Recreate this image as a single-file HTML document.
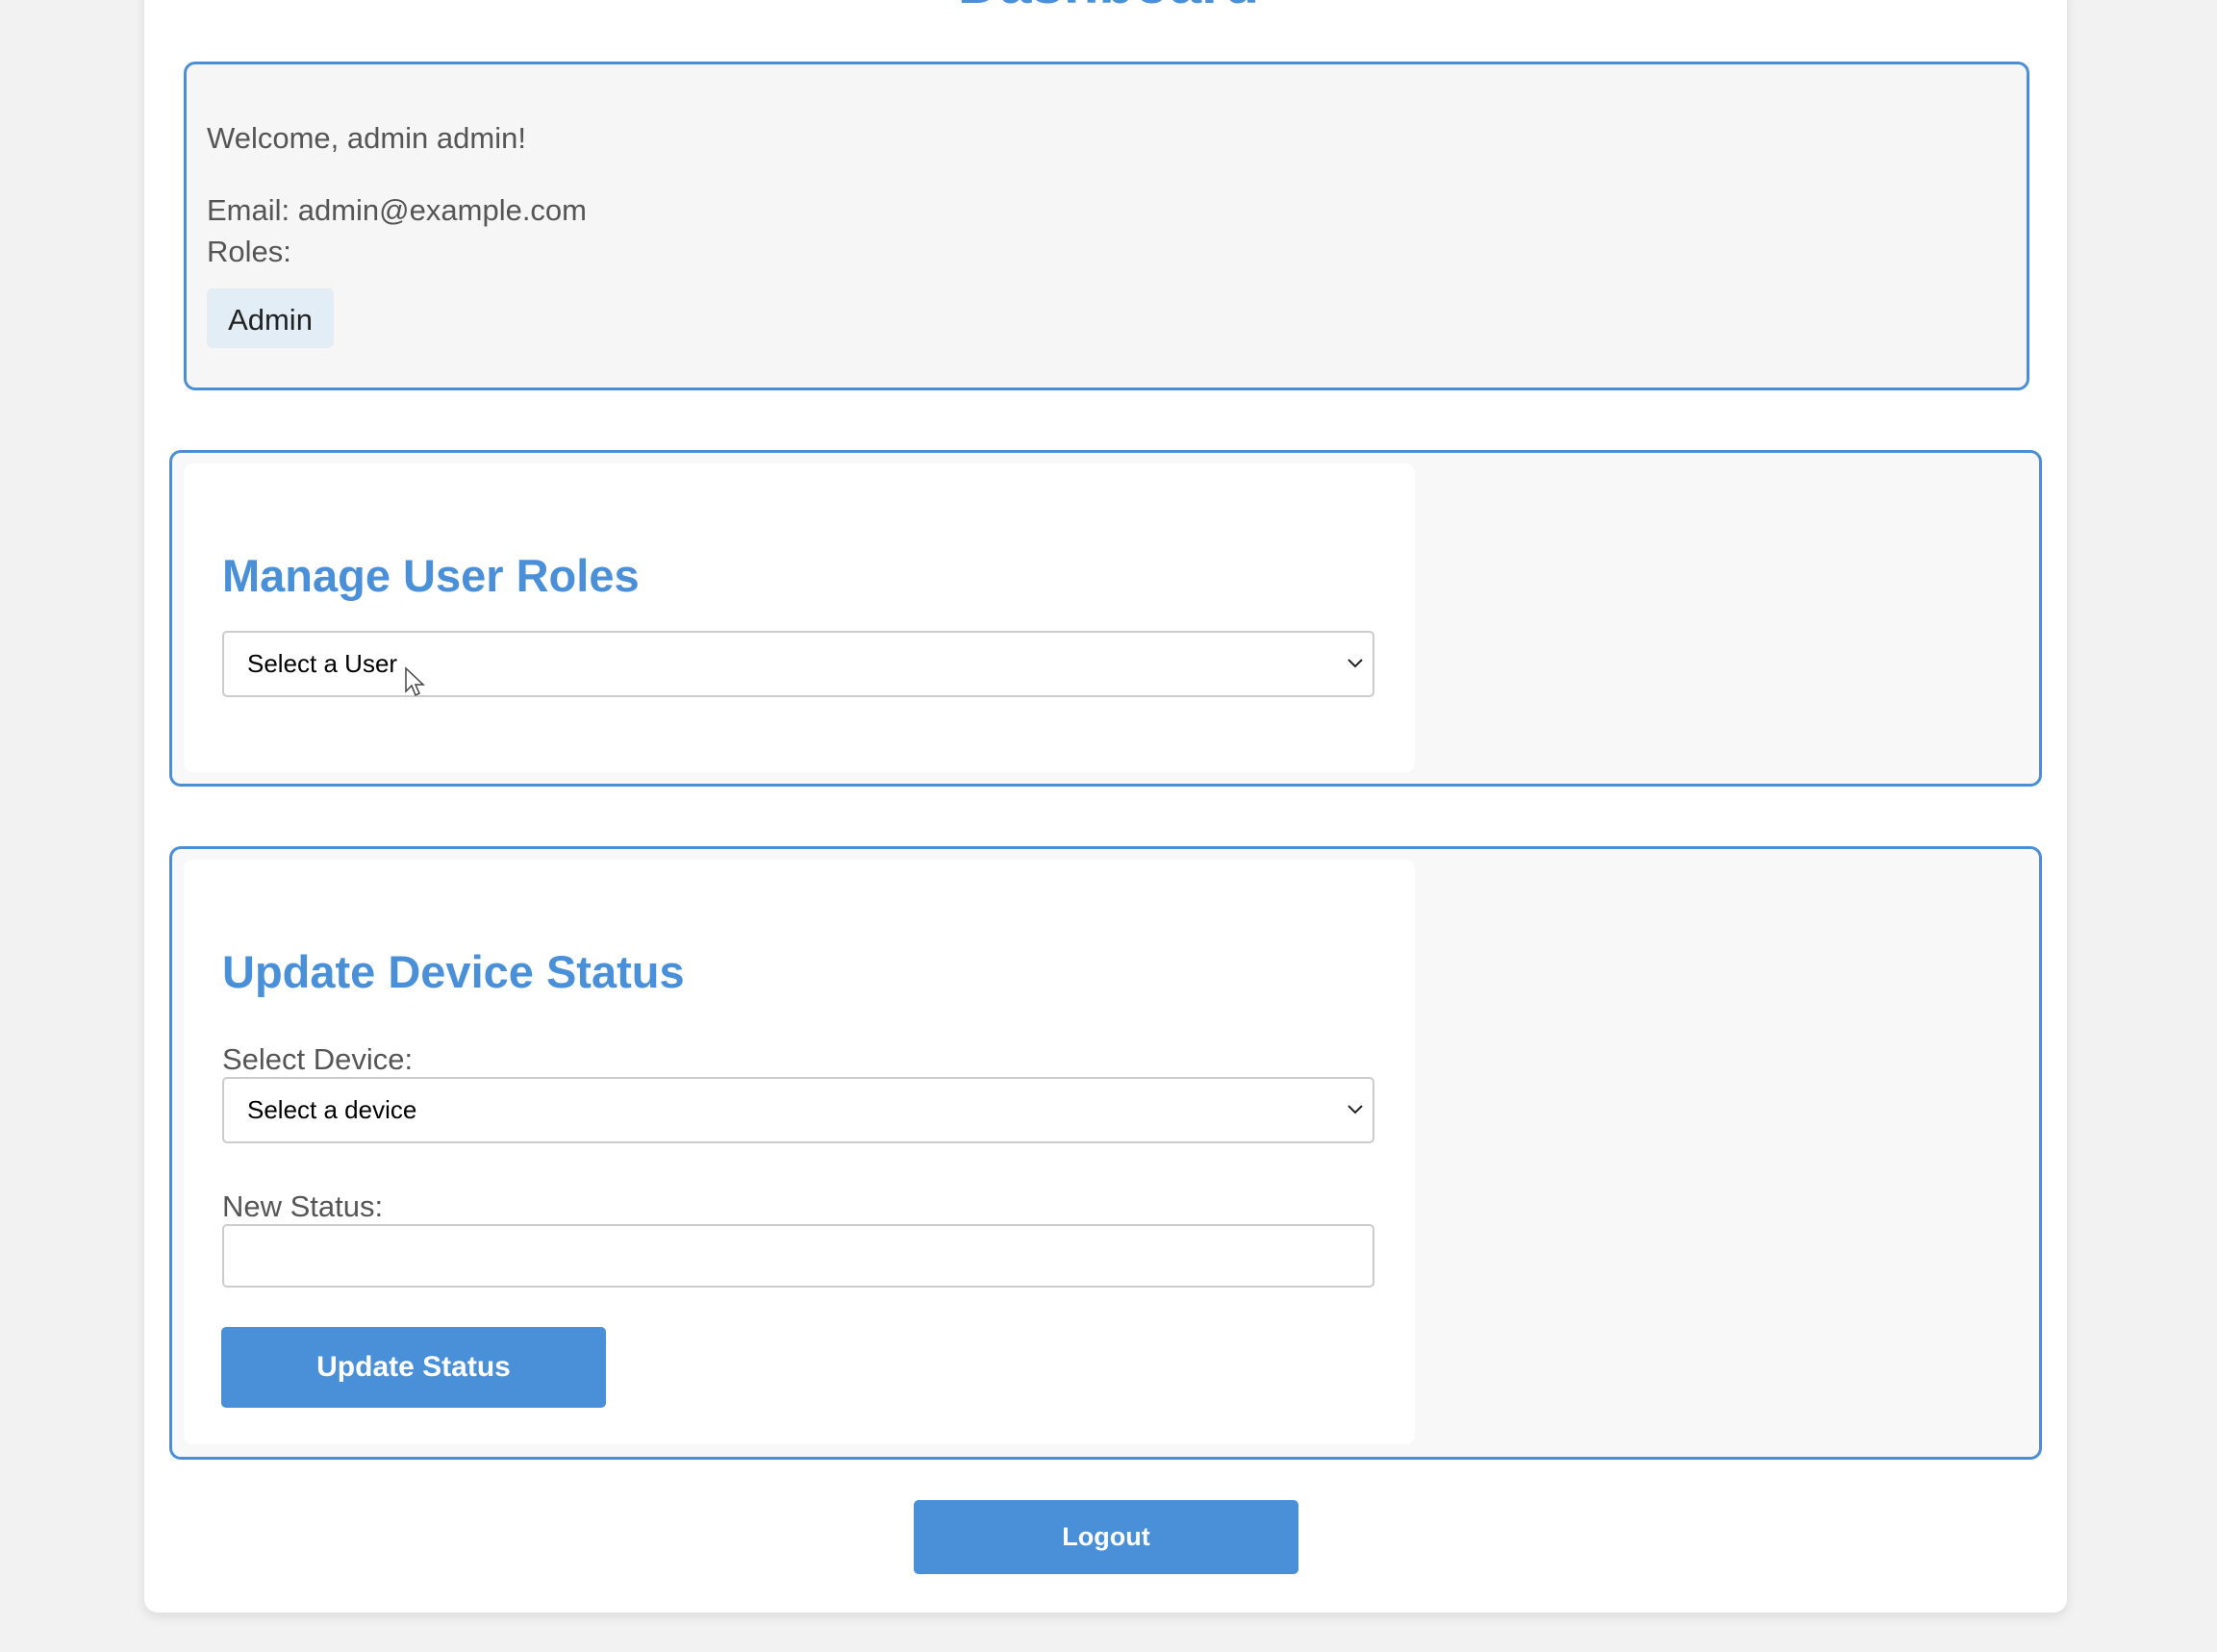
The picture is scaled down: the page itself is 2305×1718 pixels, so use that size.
<!DOCTYPE html>
<html><head><meta charset="utf-8"><style>
*{box-sizing:border-box;margin:0;padding:0}
body{width:2305px;height:1718px;background:#f2f2f2;position:relative;overflow:hidden;font-family:"Liberation Sans",sans-serif}
.abs{position:absolute}
.cont{left:150px;top:-20px;width:1999px;height:1697px;background:#fff;border-radius:14px;box-shadow:0 4px 12px rgba(0,0,0,0.1)}
.t{color:#555;font-size:31px;white-space:nowrap}
.box{border:3px solid #4a8fd6;border-radius:12px}
.panel{background:#fff;border-radius:10px}
h2{position:absolute;color:#4a90d9;font-size:47px;font-weight:bold;white-space:nowrap}
.sel{background:#fff;border:2px solid #ccc;border-radius:5px;font-size:26px;color:#000;padding-left:24px;display:flex;align-items:center}
.btn{background:#4a90d9;color:#fff;font-weight:bold;border-radius:5px;display:flex;align-items:center;justify-content:center}
</style></head><body>
<div class="abs cont"></div>
<div class="abs" style="left:0;width:2305px;top:-47px;text-align:center;color:#4a90d9;font-size:60px;font-weight:bold;line-height:60px">Dashboard</div>

<div class="abs box" style="left:191px;top:64px;width:1919px;height:342px;background:#f6f6f6"></div>
<div class="abs t" style="left:215px;top:126px">Welcome, admin admin!</div>
<div class="abs t" style="left:215px;top:201px">Email: admin@example.com</div>
<div class="abs t" style="left:215px;top:244px">Roles:</div>
<div class="abs" style="left:215px;top:300px;width:132px;height:62px;background:#e3edf5;border-radius:6px;font-size:31px;color:#222;display:flex;align-items:center;justify-content:center;padding-top:4px">Admin</div>

<div class="abs box" style="left:176px;top:468px;width:1947px;height:350px;background:#f8f8f8"></div>
<div class="abs panel" style="left:191px;top:482px;width:1280px;height:321px"></div>
<h2 style="left:231px;top:571px">Manage User Roles</h2>
<div class="abs sel" style="left:231px;top:656px;width:1198px;height:69px">Select a User</div>
<svg class="abs" style="left:1400px;top:683px" width="18" height="14"><path d="M2 3 L9 10 L16 3" fill="none" stroke="#222" stroke-width="2"/></svg>
<svg class="abs" style="left:420px;top:693px" width="24" height="34"><path d="M2 2 L2 26 L8 20 L12 30 L16 28 L12 19 L20 19 Z" fill="#fff" stroke="#444" stroke-width="1.5"/></svg>

<div class="abs box" style="left:176px;top:880px;width:1947px;height:638px;background:#f8f8f8"></div>
<div class="abs panel" style="left:191px;top:894px;width:1280px;height:608px"></div>
<h2 style="left:231px;top:983px">Update Device Status</h2>
<div class="abs t" style="left:231px;top:1084px">Select Device:</div>
<div class="abs sel" style="left:231px;top:1120px;width:1198px;height:69px">Select a device</div>
<svg class="abs" style="left:1400px;top:1147px" width="18" height="14"><path d="M2 3 L9 10 L16 3" fill="none" stroke="#222" stroke-width="2"/></svg>
<div class="abs t" style="left:231px;top:1237px">New Status:</div>
<div class="abs sel" style="left:231px;top:1273px;width:1198px;height:66px"></div>
<div class="abs btn" style="left:230px;top:1380px;width:400px;height:84px;font-size:30px">Update Status</div>

<div class="abs btn" style="left:950px;top:1560px;width:400px;height:77px;font-size:27px">Logout</div>
</body></html>
